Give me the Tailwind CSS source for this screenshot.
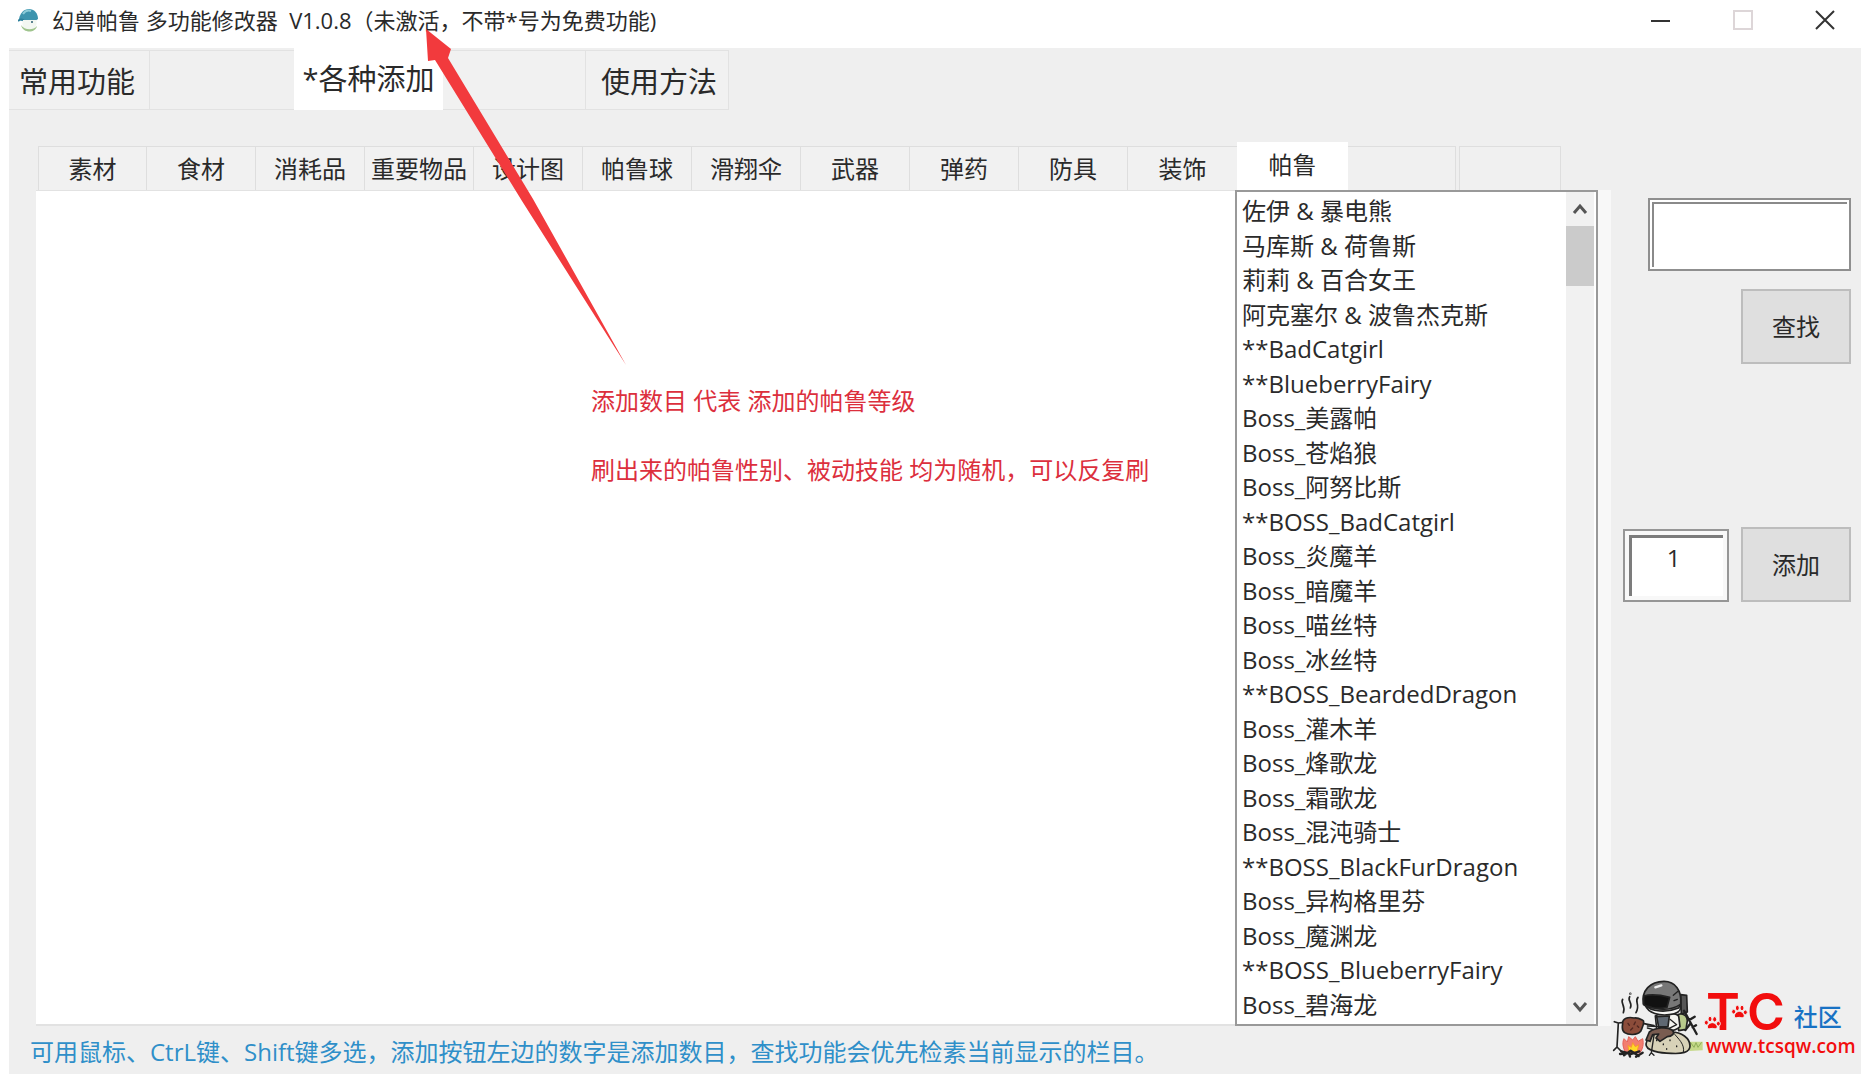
<!DOCTYPE html>
<html lang="zh-CN">
<head>
<meta charset="utf-8">
<meta name="viewport" content="width=device-width, initial-scale=1">
<title>幻兽帕鲁 多功能修改器</title>
<script src="https://cdn.jsdelivr.net/npm/@tailwindcss/browser@4"></script>
</head>
<body class="bg-white">
<div class="relative flex min-h-screen flex-col overflow-hidden font-['Open_Sans','Noto_Sans_CJK_SC',sans-serif] text-[24px] text-[#2a2a2a]">

  <header class="flex h-12 shrink-0 items-center bg-white pb-2">
    <svg class="ml-[18px] h-6 w-[22px] shrink-0" viewBox="0 0 22 24" aria-hidden="true">
      <path d="M1 11C2 5 6 1 11 1s9 4 9 10l-3 2H4z" fill="#3d94ae"/>
      <path d="M5 6c2-3 5-4 8-3" stroke="#8ccbd8" stroke-width="2" fill="none"/>
      <path d="M0 13c2-2 5-2 6 0" stroke="#2b7f9b" stroke-width="2" fill="none"/>
      <path d="M5 12h13c2 5-1 10-7 10-5 0-8-4-6-10z" fill="#f3f7f2"/>
      <path d="M3 17c3 5 12 6 16 1-1 7-14 8-16-1z" fill="#9fc48d"/>
      <circle cx="14" cy="14" r="1" fill="#2a5d70"/>
    </svg>
    <h1 class="ml-3 flex-1 whitespace-pre text-[22px] leading-8">幻兽帕鲁 多功能修改器  V1.0.8（未激活，不带*号为免费功能)</h1>
    <div class="flex items-center gap-[62px] pr-[26px]">
      <button type="button" aria-label="最小化"><svg class="h-5 w-5" viewBox="0 0 20 20" stroke="#333" stroke-width="2"><path d="M0 11h19"/></svg></button>
      <button type="button" aria-label="最大化" disabled><svg class="h-5 w-5" viewBox="0 0 20 20" fill="none" stroke="#ddd6d8" stroke-width="2"><path d="M1 1h18v18H1z"/></svg></button>
      <button type="button" aria-label="关闭"><svg class="h-5 w-5" viewBox="0 0 20 20" stroke="#333" stroke-width="2"><path d="M1 1l18 18M19 1L1 19"/></svg></button>
    </div>
  </header>

  <div class="ml-[9px] flex flex-1 flex-col bg-[#efefef]">
    <nav role="tablist" class="flex h-[62px] shrink-0 items-end text-[29px] leading-10">
      <button type="button" role="tab" class="h-[60px] w-[141px] border border-l-0 border-[#e2e2e2] bg-[#f1f1f1] pt-1 pr-1">常用功能</button>
      <button type="button" role="tab" aria-label="未命名" class="h-[60px] w-[144px] border-y border-[#e2e2e2] bg-[#f0f0f0]"></button>
      <button type="button" role="tab" aria-selected="true" class="h-[62px] w-[149px] bg-white">*各种添加</button>
      <button type="button" role="tab" aria-label="未命名" class="h-[60px] w-[143px] border border-l-0 border-[#e2e2e2] bg-[#f1f1f1]"></button>
      <button type="button" role="tab" class="h-[60px] w-[143px] border border-l-0 border-[#e2e2e2] bg-[#f1f1f1] pt-1 pl-1">使用方法</button>
    </nav>

    <div class="mt-8 flex flex-1">
      <main class="ml-[27px] flex flex-1 flex-col">
        <nav role="tablist" class="flex h-12 shrink-0 items-end pl-[2px] leading-9">
          <button type="button" role="tab" class="h-11 w-[109px] border border-b-0 border-[#dedede] bg-[#f1f1f1]">素材</button>
          <button type="button" role="tab" class="h-11 w-[109px] border-t border-r border-[#dedede] bg-[#f1f1f1]">食材</button>
          <button type="button" role="tab" class="h-11 w-[109px] border-t border-r border-[#dedede] bg-[#f1f1f1]">消耗品</button>
          <button type="button" role="tab" class="h-11 w-[109px] border-t border-r border-[#dedede] bg-[#f1f1f1]">重要物品</button>
          <button type="button" role="tab" class="h-11 w-[109px] border-t border-r border-[#dedede] bg-[#f1f1f1]">设计图</button>
          <button type="button" role="tab" class="h-11 w-[109px] border-t border-r border-[#dedede] bg-[#f1f1f1]">帕鲁球</button>
          <button type="button" role="tab" class="h-11 w-[109px] border-t border-r border-[#dedede] bg-[#f1f1f1]">滑翔伞</button>
          <button type="button" role="tab" class="h-11 w-[109px] border-t border-r border-[#dedede] bg-[#f1f1f1]">武器</button>
          <button type="button" role="tab" class="h-11 w-[109px] border-t border-r border-[#dedede] bg-[#f1f1f1]">弹药</button>
          <button type="button" role="tab" class="h-11 w-[109px] border-t border-r border-[#dedede] bg-[#f1f1f1]">防具</button>
          <button type="button" role="tab" class="h-11 w-[109px] border-t border-[#dedede] bg-[#f1f1f1]">装饰</button>
          <button type="button" role="tab" aria-selected="true" class="h-12 w-[111px] bg-white pb-[2px]">帕鲁</button>
          <button type="button" role="tab" aria-label="未命名" class="h-11 w-[108px] border-t border-r border-[#dedede] bg-[#f0f0f0]"></button>
          <button type="button" role="tab" aria-label="未命名" class="ml-[3px] h-11 w-[102px] border border-b-0 border-[#dedede] bg-[#f0f0f0]"></button>
        </nav>

        <section class="flex flex-1 bg-[#f8f8f8]">
          <div class="flex-1 border-t border-b-2 border-[#e2e2e2] bg-white pt-[192px] pl-[555px] text-[#dc2f3d]">
            <p class="leading-9">添加数目 代表 添加的帕鲁等级</p>
            <p class="mt-[33px] leading-9">刷出来的帕鲁性别、被动技能 均为随机，可以反复刷</p>
          </div>
          <div class="mr-[13px] flex w-[363px] border-2 border-[#999] bg-white">
            <ul role="listbox" aria-label="帕鲁" aria-multiselectable="true" class="flex flex-1 flex-col py-[2px] pl-[5px] leading-[34px] whitespace-nowrap">
              <li role="option" class="flex-1">佐伊 &amp; 暴电熊</li>
              <li role="option" class="flex-1">马库斯 &amp; 荷鲁斯</li>
              <li role="option" class="flex-1">莉莉 &amp; 百合女王</li>
              <li role="option" class="flex-1">阿克塞尔 &amp; 波鲁杰克斯</li>
              <li role="option" class="flex-1">**BadCatgirl</li>
              <li role="option" class="flex-1">**BlueberryFairy</li>
              <li role="option" class="flex-1">Boss_美露帕</li>
              <li role="option" class="flex-1">Boss_苍焰狼</li>
              <li role="option" class="flex-1">Boss_阿努比斯</li>
              <li role="option" class="flex-1">**BOSS_BadCatgirl</li>
              <li role="option" class="flex-1">Boss_炎魔羊</li>
              <li role="option" class="flex-1">Boss_暗魔羊</li>
              <li role="option" class="flex-1">Boss_喵丝特</li>
              <li role="option" class="flex-1">Boss_冰丝特</li>
              <li role="option" class="flex-1">**BOSS_BeardedDragon</li>
              <li role="option" class="flex-1">Boss_灌木羊</li>
              <li role="option" class="flex-1">Boss_烽歌龙</li>
              <li role="option" class="flex-1">Boss_霜歌龙</li>
              <li role="option" class="flex-1">Boss_混沌骑士</li>
              <li role="option" class="flex-1">**BOSS_BlackFurDragon</li>
              <li role="option" class="flex-1">Boss_异构格里芬</li>
              <li role="option" class="flex-1">Boss_魔渊龙</li>
              <li role="option" class="flex-1">**BOSS_BlueberryFairy</li>
              <li role="option" class="flex-1">Boss_碧海龙</li>
            </ul>
            <div class="mr-[2px] flex w-7 flex-col bg-[#f1f1f1]">
              <button type="button" aria-label="向上滚动" class="flex h-[34px] items-center justify-center"><svg class="h-3 w-4" viewBox="0 0 16 12" fill="none" stroke="#555" stroke-width="3"><path d="M2 10l6-7 6 7"/></svg></button>
              <div class="h-[60px] bg-[#cbcbcb]"></div>
              <div class="flex-1"></div>
              <button type="button" aria-label="向下滚动" class="flex h-[34px] items-center justify-center"><svg class="h-3 w-4" viewBox="0 0 16 12" fill="none" stroke="#555" stroke-width="3"><path d="M2 2l6 7 6-7"/></svg></button>
            </div>
          </div>
        </section>
      </main>

      <aside class="flex w-[250px] flex-col items-end pt-[56px] pr-[10px]">
        <div class="w-[203px] border-2 border-[#8f8f8f] bg-white p-[2px]">
          <input type="text" aria-label="查找内容" class="block h-[65px] w-full border-t-2 border-l-2 border-[#8a8a8a] bg-white px-2 outline-none">
        </div>
        <button type="button" class="mt-[18px] h-[75px] w-[110px] border-2 border-[#bdbdbd] bg-[#dfdfdf]">查找</button>
        <div class="mt-[163px] flex items-end gap-3">
          <div class="w-[106px] border-2 border-[#969696] bg-[#f8f8f8] p-1">
            <input type="text" value="1" aria-label="添加数目" class="block h-[61px] w-full border-t-[3px] border-l-[3px] border-[#7c7c7c] bg-white pr-2 pb-5 text-center outline-none">
          </div>
          <button type="button" class="h-[75px] w-[110px] border-2 border-[#bdbdbd] bg-[#dfdfdf]">添加</button>
        </div>
      </aside>
    </div>

    <footer class="flex h-12 shrink-0 items-center pl-[21px] pt-1 text-[#2f8fc9]">
      <p class="leading-9">可用鼠标、CtrL键、Shift键多选，添加按钮左边的数字是添加数目，查找功能会优先检素当前显示的栏目。</p>
    </footer>
  </div>

  <!-- pointer from the hint text to the title -->
  <svg class="pointer-events-none absolute top-0 left-0 h-[380px] w-[640px]" viewBox="0 0 640 380" aria-hidden="true">
    <path d="M426 29L451 49L448 58L533 199L626 365L522 201L435 60L428 61Z" fill="#f23a3d"/>
  </svg>

  <!-- community badge -->
  <a href="#" aria-label="TC社区" class="absolute right-0 bottom-0 h-[104px] w-[251px]">
    <svg class="h-full w-full" viewBox="150 90 753 312">
      <g fill="none" stroke="#222" stroke-width="5" stroke-linecap="round" stroke-linejoin="round">
        <path d="M188 178c-8 12 10 18 2 40M209 170c-8 12 10 18 2 34M234 172c-12 14 8 20-6 46"/>
        <circle cx="211" cy="161" r="1"/>
        <path d="M163 245l12 4-4 72-10 10M171 321l12 12M175 249l16-2M252 251l30 6"/>
        <path d="M390 305l38 0 0 26-40 2z" fill="#c6d98a" stroke="none"/>
        <path d="M392 308l10 14 6-14 6 14 10-14" stroke="#8eae56" stroke-width="3"/>
        <path d="M258 312c4-30 44-38 76-36 30 0 56 18 56 42 0 20-26 24-56 22-34 0-78-8-76-28z" fill="#d8d2b8"/>
        <path d="M340 278c14 18 36 34 30 60" stroke-width="3"/>
        <path d="M290 300v2M310 312v2M330 300v2M350 318v2M320 326v2" stroke-width="4"/>
        <path d="M362 164l18 2 2 50-18 6z" fill="#555"/>
        <path d="M372 212l38 70M388 240l16-10M392 250l-16 20M398 262l10-6" stroke-width="7"/>
        <path d="M350 226c16-10 32 0 32 16l-4 26-22 4z" fill="#b8ca8c"/>
        <path d="M286 228c20-12 54-12 70 0l4 32c-16 16-52 18-70 6z" fill="#f4f4f0"/>
        <path d="M290 230l38-2-4 32-28 2z" fill="#5f6872"/>
        <path d="M262 258l32 2 20 0M262 264l30 8M330 238l20 16-24 12-14-4" stroke-width="4"/>
        <path d="M268 276c18-14 54-16 68-6 12 10-2 20-14 20l-22 14-12-10 8-12-18 2-8 20-12-4z" fill="#795c50"/>
        <path d="M282 286l-8 52-6 8M274 338l8 8" stroke-width="4"/>
        <path d="M256 196c8 24 44 32 72 28 18-2 34-8 34-22l-4-20-98-6z" fill="#f5f5f3"/>
        <path d="M250 192c-6-40 20-68 62-68 34 0 54 28 50 68l-6 12c-34 14-82 14-106-12z" fill="#777"/>
        <path d="M251 168c22-6 54-2 78 4l-8 30c-24 6-56 2-70-8z" fill="#111"/>
        <path d="M264 198c30 14 68 14 96-4M340 166l14-12M342 182l10-4" stroke-width="4"/>
        <path d="M286 142l18-6" stroke="#eee" stroke-width="7"/>
        <path d="M188 252c-2-18 18-22 34-18 16-2 22 6 28 8 4 10-4 22-8 32-10 12-36 12-48 4-8-6-8-16-6-26z" fill="#8b4c3a"/>
        <path d="M204 250l4 6M226 246l-4 8M212 270l6-6M236 262l-4-4" stroke="#4f2620" stroke-width="4"/>
        <path d="M196 336c-10-18-8-32-4-40l10 10 4-16 12 10 8-10 8 14 14-8c4 16 0 32-8 42z" fill="#f27e70" stroke="#e6615a" stroke-width="3"/>
        <path d="M206 334l-2-18 10 6 4-14 8 12 10-6-4 20z" fill="#ffd928" stroke="#f79a2d" stroke-width="3"/>
        <path d="M184 334l30 8 24-8M192 346l20-14 24 16M180 342l22-2M210 350l-4-12M228 350l20-12" stroke-width="7"/>
      </g>
      <g fill="#f20d0d">
        <text x="438" y="271" class="font-['Inter'] text-[154px] font-semibold">T</text>
        <text x="561" y="271" class="font-['Inter'] text-[154px] font-semibold">C</text>
        <g stroke="#efefef" stroke-width="3">
          <path d="M538 214c8 0 18 10 14 17-4 5-9 1-14 1s-10 4-14-1c-4-7 6-17 14-17z"/>
          <ellipse cx="521" cy="215" rx="6" ry="7"/><ellipse cx="532" cy="204" rx="6" ry="8"/><ellipse cx="546" cy="204" rx="6" ry="8"/><ellipse cx="556" cy="217" rx="6" ry="7"/>
          <path d="M457 248c8 0 18 9 14 16-4 5-9 1-14 1s-10 4-14-1c-4-7 6-16 14-16z"/>
          <ellipse cx="439" cy="248" rx="6" ry="7"/><ellipse cx="450" cy="237" rx="6" ry="8"/><ellipse cx="464" cy="238" rx="6" ry="8"/><ellipse cx="475" cy="251" rx="6" ry="7"/>
        </g>
        <text x="438" y="339" class="font-['Open_Sans'] text-[57px] font-semibold">www.tcsqw.com</text>
      </g>
      <text x="701" y="257" fill="#1872c4" class="font-['Noto_Sans_CJK_SC'] text-[72px] font-medium">社区</text>
    </svg>
  </a>
</div>
</body>
</html>
